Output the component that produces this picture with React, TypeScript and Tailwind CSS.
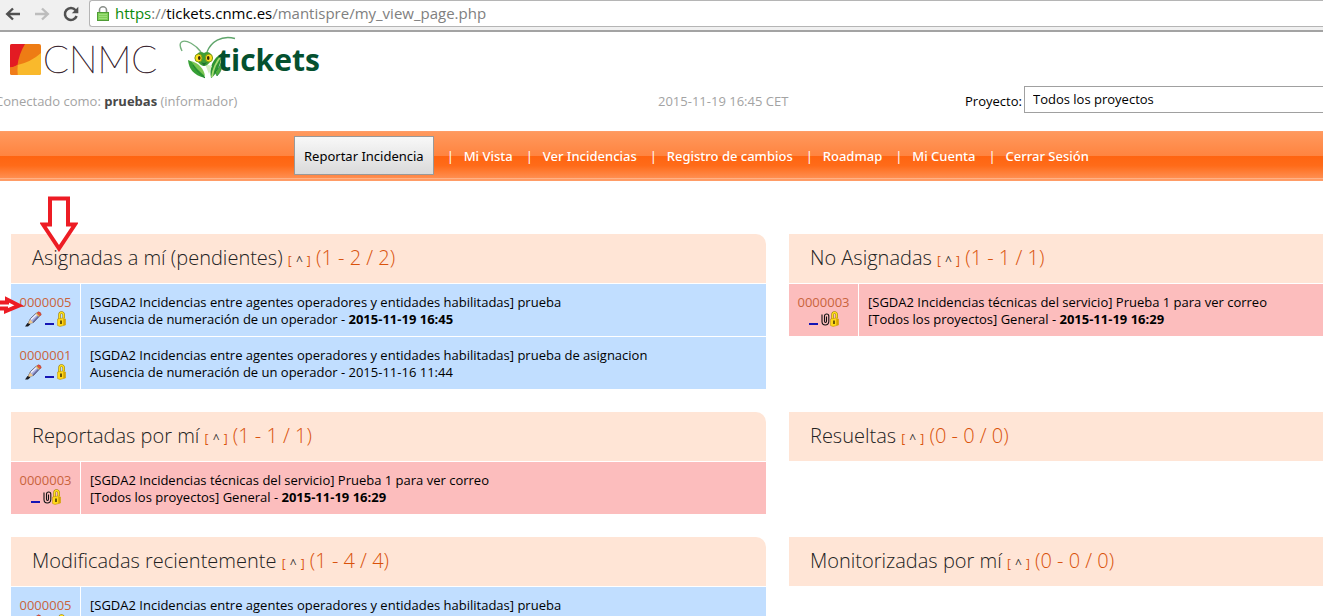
import type { ReactNode } from "react";

type Issue = {
  id: string;
  tone: "blue" | "red";
  kind: "edit" | "clip";
  title: string;
  category: string;
  date: string;
  recent?: boolean;
};

type Box = { title: string; range: string; issues: Issue[] };

const agentes = "[SGDA2 Incidencias entre agentes operadores y entidades habilitadas] prueba";
const tecnicas = "[SGDA2 Incidencias técnicas del servicio] Prueba 1 para ver correo";
const ausencia = "Ausencia de numeración de un operador";
const general = "[Todos los proyectos] General";

const issue5: Issue = { id: "0000005", tone: "blue", kind: "edit", title: agentes, category: ausencia, date: "2015-11-19 16:45", recent: true };
const issue3: Issue = { id: "0000003", tone: "red", kind: "clip", title: tecnicas, category: general, date: "2015-11-19 16:29", recent: true };
const issue1: Issue = { id: "0000001", tone: "blue", kind: "edit", title: agentes + " de asignacion", category: ausencia, date: "2015-11-16 11:44" };

const boxes: Box[] = [
  { title: "Asignadas a mí (pendientes)", range: "(1 - 2 / 2)", issues: [issue5, issue1] },
  { title: "No Asignadas", range: "(1 - 1 / 1)", issues: [issue3] },
  { title: "Reportadas por mí", range: "(1 - 1 / 1)", issues: [issue3] },
  { title: "Resueltas", range: "(0 - 0 / 0)", issues: [] },
  { title: "Modificadas recientemente", range: "(1 - 4 / 4)", issues: [issue5] },
  { title: "Monitorizadas por mí", range: "(0 - 0 / 0)", issues: [] },
];

const links = ["Mi Vista", "Ver Incidencias", "Registro de cambios", "Roadmap", "Mi Cuenta", "Cerrar Sesión"];

function BackArrow() {
  return (
    <svg width="16" height="14" viewBox="0 0 16 14" fill="none" stroke="currentColor" strokeWidth="2.4" aria-hidden="true">
      <path d="M15 7H2.5M8 1.5 2.2 7 8 12.5" />
    </svg>
  );
}

function Reload() {
  return (
    <svg width="16" height="16" viewBox="0 0 16 16" aria-hidden="true">
      <path d="M12.6 4.2A6 6 0 1 0 13.6 10" fill="none" stroke="#505050" strokeWidth="2.5" />
      <path d="M15.3 0.8V7.2H8.8Z" fill="#505050" />
    </svg>
  );
}

function GreenLock() {
  return (
    <svg width="12" height="15" viewBox="0 0 12 15" aria-hidden="true">
      <path d="M2.5 7V4a3.5 3.2 0 0 1 7 0v3" fill="none" stroke="#8a8f8a" strokeWidth="1.6" />
      <rect x="0.5" y="6.5" width="11" height="8" fill="#7fcf57" stroke="#4f9c36" />
      <path d="M2 8.5h8M2 10.5h8M2 12.5h8" stroke="#a5e184" strokeWidth="0.8" />
    </svg>
  );
}

function CnmcLogo() {
  return (
    <svg width="169" height="47" viewBox="0 -8 169 47" role="img" aria-label="CNMC">
      <defs>
        <clipPath id="mark">
          <rect width="31" height="31" rx="2" />
        </clipPath>
      </defs>
      <g clipPath="url(#mark)">
        <rect width="31" height="31" fill="#ee7c14" />
        <path d="M0 0H15Q9 10 7.5 21Q4 23 0 23.5Z" fill="#e31b23" />
        <path d="M31 9Q21 18 7.5 21Q7 26 7.5 31H31Z" fill="#f9b92c" />
        <path d="M0 23.5Q4 23 7.5 21Q7 26 7.5 31H0Z" fill="#f07c1a" />
      </g>
      <text x="33" y="29" fontFamily="Lato, sans-serif" fontSize="38" fontWeight="100" fill="#3a2630" stroke="#3a2630" strokeWidth="0.6">CNMC</text>
    </svg>
  );
}

function Mantis() {
  return (
    <svg width="60" height="44" viewBox="0 0 60 44" aria-hidden="true">
      <path d="M22 16C17 9 7 3 2.5 6C-0.5 8 1.5 12 3 15" fill="none" stroke="#74b07c" strokeWidth="1.4" />
      <path d="M28 16C32 6 42 -1 56 2.5" fill="none" stroke="#5fa56b" strokeWidth="1.4" />
      <path d="M9 24C10 33 14 39 26 42C25 35 17 27 9 24Z" fill="#36a035" />
      <path d="M12 25C20 27 25 33 26 40C21 36 16 31 12 25Z" fill="#7cc653" />
      <path d="M14 29C17 34 21 38 26 42" stroke="#1f7f33" strokeWidth="1" fill="none" />
      <path d="M43 17C33 23 30 32 32 42C36 40 41 32 43 17Z" fill="#2c9431" />
      <path d="M43 19C37 26 34 33 33 41" stroke="#a6db72" strokeWidth="1.8" fill="none" />
      <path d="M43 22C44 31 42 36 38 40L36 36Q42 31 43 22Z" fill="#4fae3b" stroke="#0f6b37" strokeWidth="0.6" />
      <path d="M26 28L30 38L33 30Z" fill="#d5efc2" />
      <path d="M19 17Q22 15 25 17Q28 15 31 17Q35 20 31 26Q28 30 25 30Q22 30 19 26Q15 20 19 17Z" fill="#3f9d35" />
      <path d="M22 26Q25 28 28 26L25 30Z" fill="#1d6f2e" />
      <ellipse cx="19.5" cy="22" rx="3.6" ry="4" fill="#ffdf1f" stroke="#7d9b17" />
      <ellipse cx="30" cy="22" rx="3.6" ry="4" fill="#ffdf1f" stroke="#7d9b17" />
      <ellipse cx="20.3" cy="22" rx="1.3" ry="1.9" fill="#3b2a08" />
      <ellipse cx="29.2" cy="22" rx="1.3" ry="1.9" fill="#3b2a08" />
    </svg>
  );
}

function Pencil() {
  return (
    <svg width="17" height="16" viewBox="0 0 17 16" aria-hidden="true">
      <path d="M3 12.5 5.5 7.5 11.5 2 14.5 5 8.5 11.5Z" fill="#aab0e0" stroke="#45465e" strokeWidth="0.8" />
      <path d="M6 8.5 12 3" stroke="#f2f3ff" strokeWidth="1.4" />
      <path d="M8 10.8 13.8 5" stroke="#6468a0" strokeWidth="1.2" />
      <path d="M2.5 13.5 5 8.5 8 11.5Z" fill="#efc98d" />
      <path d="M0 15.5H3L5.5 13.2 2.5 12Z" fill="#1c1c22" />
      <path d="M12 1.8 13.3 0.8Q16.3 1 16.2 4L14.8 5Z" fill="#e8503c" stroke="#a13a2a" strokeWidth="0.5" />
      <path d="M11.2 2.4 14.2 5.4" stroke="#e7b84a" strokeWidth="1.2" />
    </svg>
  );
}

function GoldLock() {
  return (
    <svg width="9" height="16" viewBox="0 0 9 16" aria-hidden="true">
      <path d="M2.5 8V4Q2.5 1.5 4.5 1.5T6.7 4V7" fill="none" stroke="#9a7a00" strokeWidth="2.4" />
      <path d="M2.5 8V4Q2.5 1.5 4.5 1.5T6.7 4V7" fill="none" stroke="#ffe21a" strokeWidth="1.3" />
      <path d="M0.5 8 6 7l2.5 1v6L3 15.5l-2.5-1Z" fill="#ffd91a" stroke="#b98c00" strokeWidth="0.5" />
      <path d="M6.3 7.5 8.3 8.2V13.8L6.3 14.5Z" fill="#d9a300" />
      <path d="M4 9.5v3.5" stroke="#3c2d00" strokeWidth="1.5" />
    </svg>
  );
}

function Clip() {
  return (
    <svg width="9" height="13" viewBox="0 0 9 13" fill="none" stroke="#111" aria-hidden="true">
      <path d="M1 1.5V8.5Q1 12 4.3 12T7.8 8.5V3Q7.8 1 5.7 1T3.5 3V8Q3.5 9.5 4.5 9.5T5.5 8V3.5" strokeWidth="1.1" />
    </svg>
  );
}

function RedArrow() {
  return (
    <svg className="absolute -top-[38px] left-[29px]" width="38" height="56" viewBox="0 0 38 56" aria-hidden="true">
      <path d="M10 2.5H28V28.5H35L19 52.5L3 28.5H10Z" fill="#fff" stroke="#ed1c24" strokeWidth="4" />
    </svg>
  );
}

function SideArrow() {
  return (
    <svg className="absolute top-[61px] -left-[11px]" width="24" height="22" viewBox="0 0 24 22" aria-hidden="true">
      <path d="M-4 7.5H7V4.5L19 10.5L6 16V13.5H-4Z" fill="#fff" stroke="#ed1c24" strokeWidth="4" />
    </svg>
  );
}

function IssueRow({ issue }: { issue: Issue }) {
  const tone = issue.tone === "blue" ? "bg-[#c1deff]" : "bg-[#fcbdbd]";
  return (
    <tr className={tone}>
      <td className="w-[70px] border-t border-r border-white pt-[10px] pb-2 text-center align-top">
        <a href="#" className="block h-[17px] text-[#c9643c]">{issue.id}</a>
        <span className="flex h-[17px] items-start justify-center">
          {issue.kind === "edit" && <a href="#" aria-label="Editar" className="mr-[3px]"><Pencil /></a>}
          <span className="mt-[12px] mr-[3px] h-[2px] w-[9px] bg-[#1515b5]" />
          {issue.kind === "clip" && <span className="pt-[2px]"><Clip /></span>}
          <GoldLock />
        </span>
      </td>
      <td className="border-t border-white px-[9px] pt-[10px] pb-2 align-top whitespace-nowrap">
        <div>{issue.title}</div>
        <div>
          {issue.category} - {issue.recent ? <b>{issue.date}</b> : issue.date}
        </div>
      </td>
    </tr>
  );
}

function IssueBox({ box, children }: { box: Box; children?: ReactNode }) {
  return (
    <section className="relative min-w-0">
      <table className="w-full border-separate border-spacing-0 text-[13px] leading-[17px] text-black">
        <thead>
          <tr>
            <th colSpan={2} className="h-[49px] rounded-tr-[10px] bg-[#ffe5d6] px-[21px] pt-[2px] text-left align-middle text-[20px] leading-7 font-light whitespace-nowrap">
              <a href="#" className="text-[#222]">{box.title}</a>{" "}
              <a href="#" className="text-[12px] font-normal text-[#d9520b]">[ <span className="mx-px text-[#333]">^</span> ]</a>{" "}
              <span className="text-[#d9520b]">{box.range}</span>
            </th>
          </tr>
        </thead>
        <tbody>
          {box.issues.map((issue) => (
            <IssueRow key={issue.id} issue={issue} />
          ))}
        </tbody>
      </table>
      {children}
    </section>
  );
}

export default function App() {
  return (
    <div className="h-screen overflow-hidden bg-white font-['Open_Sans','Noto_Sans',sans-serif] text-[13px]">
      <div className="flex h-[32px] items-start border-b-2 border-[#a3a3a3] bg-[#f0f0f0] pl-[5px]">
        <div className="flex h-[27px] w-[84px] items-center gap-[13px]">
          <button aria-label="Atrás" className="text-[#505050]"><BackArrow /></button>
          <button aria-label="Adelante" className="-scale-x-100 text-[#bdbdbd]"><BackArrow /></button>
          <button aria-label="Recargar"><Reload /></button>
        </div>
        <div className="flex h-[27px] flex-1 items-center gap-[6px] rounded-l-[3px] border border-r-0 border-[#b5b5b5] bg-white pl-[7px] text-[15px] text-[#808080]">
          <GreenLock />
          <div><span className="text-[#0b8a0b]">https</span>://<span className="text-black">tickets.cnmc.es</span>/mantispre/my_view_page.php</div>
        </div>
      </div>

      <header>
        <div className="flex h-[52px] items-start pt-1 pl-[10px]">
          <CnmcLogo />
          <div className="flex">
            <Mantis />
            <span className="-ml-[21px] pt-[8px] text-[30px] leading-[32px] font-bold text-[#04502f]">tickets</span>
          </div>
        </div>
        <div className="flex h-[47px] items-start text-[13px] leading-[34px] text-[#a3a3a3]">
          <div className="-ml-[5px] w-[663px]">Conectado como: <b className="text-[#484848]">pruebas</b> (informador)</div>
          <div className="w-[307px]">2015-11-19 16:45 CET</div>
          <label htmlFor="project" className="w-[59px] whitespace-nowrap text-black">Proyecto:</label>
          <select id="project" className="mt-[2px] h-[27px] flex-1 appearance-none border border-r-0 border-[#a0a0a0] bg-white px-[8px] text-[13px] leading-[25px] text-black">
            <option>Todos los proyectos</option>
          </select>
        </div>
      </header>

      <nav className="flex h-[50px] items-start border-y border-[#ff9c66] bg-[linear-gradient(#ff995e_0%,#ff8440_49%,#ff6410_50%,#ff6b19_70%,#ff8d4e_95%,#ffb48a_97%,#ff8d4e_100%)] pt-1 pl-[294px] font-['Noto_Sans',sans-serif] text-[13px] leading-[41px] text-white">
        <button className="mr-[13px] h-[39px] border border-[#999] bg-linear-to-b from-[#f8f8f8] to-[#dadada] px-[9px] pt-[2px] leading-[35px] text-black">Reportar Incidencia</button>
        {links.map((link) => (
          <span key={link} className="flex whitespace-nowrap">
            <span className="w-[17px]">|</span>
            <a href="#" className="mr-[13px] font-medium">{link}</a>
          </span>
        ))}
      </nav>

      <main className="-mr-10 grid grid-cols-[755fr_574fr] gap-[23px] pt-[53px] pl-[11px]">
        {boxes.map((box, i) => (
          <IssueBox key={box.title} box={box}>
            {i === 0 && <RedArrow />}
            {i === 0 && <SideArrow />}
          </IssueBox>
        ))}
      </main>
    </div>
  );
}
